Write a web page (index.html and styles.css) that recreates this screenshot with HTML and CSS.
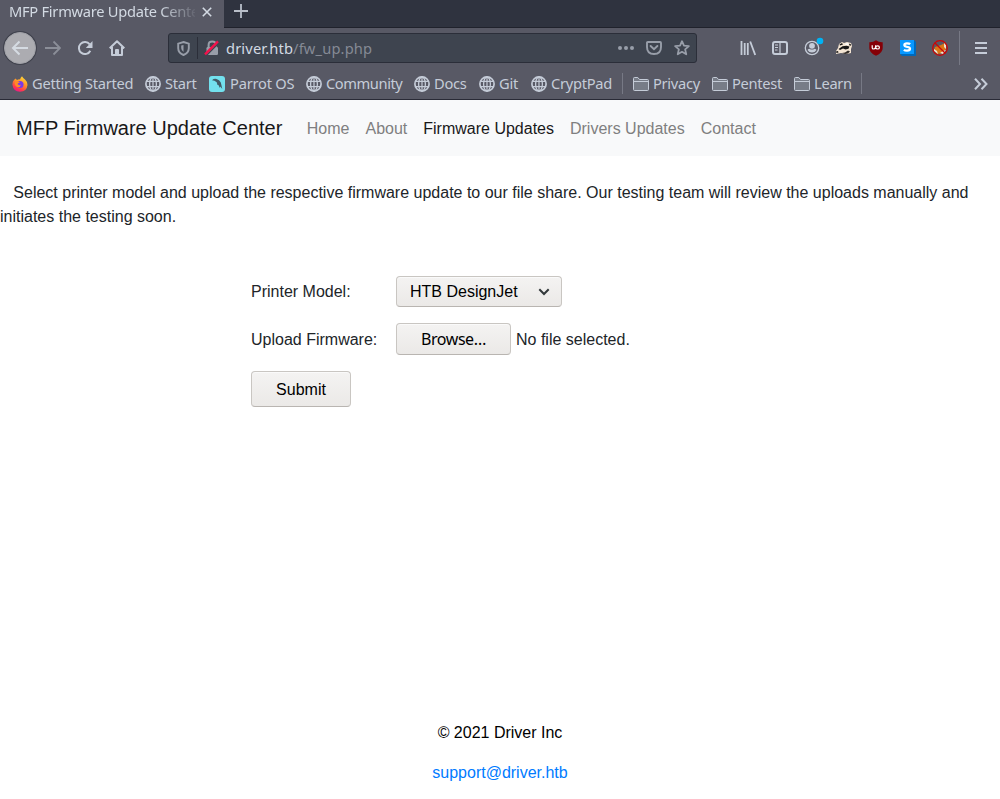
FILE: index.html
```
<!DOCTYPE html>
<html lang="en">
<head>
<meta charset="utf-8">
<title>MFP Firmware Update Center</title>
<link rel="stylesheet" href="styles.css">
</head>
<body>
<svg class="defs" aria-hidden="true">
  <symbol id="globe" viewBox="0 0 16 16"><g fill="none" stroke="currentColor"><circle cx="8" cy="8" r="7.1" stroke-width="1.7"/><ellipse cx="8" cy="8" rx="3.4" ry="7" stroke-width="1.3"/><path d="M8 1v14M1.5 5.3h13M1.5 10.7h13" stroke-width="1.2"/></g></symbol>
  <symbol id="folder" viewBox="0 0 16 16"><path d="M.5 13.5v-11q0-1 1-1h3.3l1.7 2h8q1 0 1 1v9q0 1-1 1h-13q-1 0-1-1zM.8 5.5h14.5" fill="#777c87" stroke="currentColor"/></symbol>
</svg>
<header class="browser">
  <div class="tabstrip">
    <div class="tab"><span class="tab-title">MFP Firmware Update Center</span>
      <svg class="close" width="10" height="10" viewBox="0 0 10 10"><path d="M.8.8l8.4 8.4M9.2.8L.8 9.2" fill="none" stroke="currentColor" stroke-width="1.6"/></svg>
    </div>
    <svg class="plus" width="14" height="14" viewBox="0 0 14 14"><path d="M7 0v14M0 7h14" stroke="currentColor" stroke-width="1.8"/></svg>
  </div>
  <div class="toolbar">
    <button class="back" aria-label="Back"><svg width="18" height="16" viewBox="0 0 18 16"><path d="M17 8H2M8.5 1.5L2 8l6.500 6.500" fill="none" stroke="currentColor" stroke-width="2"/></svg></button>
    <svg class="forward" width="16" height="16" viewBox="0 0 16 16"><path d="M0 8h14.500M8.500 1.500L15 8l-6.500 6.500" fill="none" stroke="currentColor" stroke-width="1.8"/></svg>
    <svg class="reload" width="16" height="16" viewBox="0 0 16 16"><path d="M12.700 4.400A6 6 0 1 0 13.300 10.700" fill="none" stroke="currentColor" stroke-width="2"/><path d="M15.500 1v7H8.800z" fill="currentColor"/></svg>
    <svg class="home" width="16" height="16" viewBox="0 0 16 16"><path d="M.7 8.300L8 1.300l7.300 7M3 7v8h10V7M7 15v-5h2v5" fill="none" stroke="currentColor" stroke-width="2" stroke-linejoin="round"/></svg>
    <div class="urlbar">
      <svg class="shield" width="13" height="15" viewBox="0 0 13 15"><path d="M6.500 1l5.300 1.600v4.600q0 4.600-5.300 6.800Q1.200 11.800 1.200 7.200V2.600z" fill="none" stroke="currentColor" stroke-width="1.900"/><path d="M6.500 4v7Q4.200 9.300 4.200 7V4.500z" fill="currentColor"/></svg>
      <span class="url-sep"></span>
      <svg class="lock" width="16" height="16" viewBox="0 0 16 16"><path d="M4.600 8V5q0-3.400 3.600-3.400T11.800 5v3" fill="none" stroke="currentColor" stroke-width="2"/><rect x="2.500" y="7" width="11.500" height="8" rx="1.200" fill="currentColor"/><path d="M2.600 15.200L14.600 3" stroke="#3e444f" stroke-width="1.600"/><path d="M1 14.400L14 1.400" stroke="#f4104a" stroke-width="2.300"/></svg>
      <span class="url">driver.htb<span class="path">/fw_up.php</span></span>
      <svg class="dots" width="16" height="4" viewBox="0 0 16 4"><g fill="currentColor"><circle cx="2" cy="2" r="2"/><circle cx="8" cy="2" r="2"/><circle cx="14" cy="2" r="2"/></g></svg>
      <svg class="pocket" width="16" height="14" viewBox="0 0 16 14"><path d="M1.900 1h12.200q.9 0 .9 1v4q0 7-7 7T1 6V2q0-1 .9-1z" fill="none" stroke="currentColor" stroke-width="1.900"/><path d="M4.600 5L8 8.200 11.400 5" fill="none" stroke="currentColor" stroke-width="1.900" stroke-linecap="round"/></svg>
      <svg class="star" width="16" height="16" viewBox="0 0 16 16"><path d="M8 1.200l1.950 4.450 4.900.5-3.700 3.200 1.100 4.900L8 11.800l-4.250 2.450 1.100-4.900-3.700-3.200 4.900-.5z" fill="none" stroke="currentColor" stroke-width="1.800" stroke-linejoin="round"/></svg>
    </div>
    <div class="actions">
      <svg width="16" height="16" viewBox="0 0 16 16"><path d="M1.500 1v14M4.700 3v12M7.800 3v12M10.200 1.500l5 13.500" fill="none" stroke="currentColor" stroke-width="1.800"/></svg>
      <svg width="16" height="16" viewBox="0 0 16 16"><rect x="1" y="2" width="14" height="12" rx="2" fill="none" stroke="currentColor" stroke-width="2"/><path d="M8 2v12M3 5h3M3 7.500h3M3 10h2.500" stroke="currentColor" stroke-width="1.200"/></svg>
      <svg width="20" height="20" viewBox="0 0 20 20"><circle cx="8" cy="12" r="6.700" fill="none" stroke="currentColor" stroke-width="1.300"/><circle cx="8" cy="9.800" r="2.900" fill="currentColor"/><path d="M3.500 14q.8-1.300 2-1.300Q8 14.500 10.500 12.700q1.200 0 2 1.300Q11 16.500 8 16.500T3.500 14z" fill="currentColor"/><circle cx="16" cy="5" r="3.300" fill="#00b3f4"/></svg>
      <svg width="18" height="16" viewBox="0 0 18 16"><path d="M1 11l2-3 1-4 3-2 2 1 3-1 4 1 1 3-1 3v4l-4 1-6-1-5 1z" fill="#f3e4d2"/><path d="M4.500 4.500L7 3l1 1.500-3 1zM3.500 9l4-2.700 4-.5 3 .7-1 2.200-3 .8-2.500-1-3 1.500zM1 11.500l2-.5.500 1.500-2 .5zM14.500 3.500l1.500 1-.5 1.500-1.500-1z" fill="#171717"/><path d="M7 13l3-.5 3-2 2 1-2 2-3 .5z" fill="#322c29"/><path d="M9.500 4l3-1 1.500 1.500-3 .5z" fill="#fff"/></svg>
      <svg width="14" height="16" viewBox="0 0 14 16"><path d="M7 .3q3 2.200 6.700 1.900V8q0 5-6.700 7.800Q.3 13 .3 8V2.200Q4 2.500 7 .3z" fill="#850006"/><path d="M3.200 5.200v2.500q0 1.300 1.300 1.300 1.500 0 2-1.500.4-1.700 2.200-1.700 1.700 0 1.700 1.600T8.700 9Q7 9 6.600 7.500V5.200" fill="none" stroke="#fff" stroke-width="1.200"/></svg>
      <svg width="16" height="16" viewBox="0 0 16 16"><path d="M14 0l2 2v14H2l-2-2z" fill="#0068b8"/><path d="M0 0h14v14H0z" fill="#0798ff"/><path d="M10.200 4.200Q9.200 3.300 7 3.300 4.400 3.300 4.400 5q0 1.400 2.800 1.900 2.800.4 2.800 1.900 0 1.900-2.900 1.900-2.200 0-3.200-1" fill="none" stroke="#fff" stroke-width="2.300"/></svg>
      <svg width="16" height="16" viewBox="0 0 16 16"><path d="M3 7l3-1 3-1 4-2 1 6-3 4-6 1-3-4z" fill="#dc7616"/><path d="M2 9l3 2 1 3-4-3zM12 3l2 2v4l-2-2zM11 11l3-1-3 4-3-1z" fill="#eee2d0"/><circle cx="8" cy="8" r="7.300" fill="none" stroke="#ce0505" stroke-width="1.300"/><path d="M2.800 2.800l10.400 10.400" stroke="#c90808" stroke-width="1.300"/></svg>
      <span class="tool-sep"></span>
      <svg width="12" height="12" viewBox="0 0 12 12"><path d="M0 1h12M0 6h12M0 11h12" stroke="currentColor" stroke-width="2"/></svg>
    </div>
  </div>
  <nav class="bookmarks">
    <a class="mark"><svg class="ico" viewBox="0 0 16 16"><defs><linearGradient id="fox" x1=".8" y1="0" x2=".3" y2="1"><stop offset="0" stop-color="#ffe33b"/><stop offset=".45" stop-color="#ff9028"/><stop offset=".8" stop-color="#ff3750"/><stop offset="1" stop-color="#e7168c"/></linearGradient></defs><path d="M3.500 2.500L5 4q2-1 3-.5Q8.500 1.500 10 .3q1 2 3 3.200Q15.500 5.500 15.500 9q-.7 6.700-7.500 6.700T.4 8.500Q.5 5 2 4z" fill="url(#fox)"/><circle cx="8" cy="8.600" r="3.500" fill="#7b39e8"/><path d="M3 5.500q3-1 5 1-2 0-2.500 1.500Q7 10 9 8.500 8 12 5 11 2 9 3 5.500z" fill="#ff8b24"/></svg><span>Getting Started</span></a>
    <a class="mark start"><svg class="ico"><use href="#globe"/></svg><span>Start</span></a>
    <a class="mark parrot"><svg class="ico" viewBox="0 0 16 16"><rect width="16" height="16" rx="3" fill="#73e1ee"/><path d="M3 4.300Q5 2.300 7.500 3q3 .5 4.300 3.500l1.500 6.500-2-2.500-.4 1.500-1.500-3L8.500 9 7.700 6.200Q5.500 4.500 3 4.300z" fill="#435b66"/></svg><span>Parrot OS</span></a>
    <a class="mark community"><svg class="ico"><use href="#globe"/></svg><span>Community</span></a>
    <a class="mark docs"><svg class="ico"><use href="#globe"/></svg><span>Docs</span></a>
    <a class="mark git"><svg class="ico"><use href="#globe"/></svg><span>Git</span></a>
    <a class="mark crypt"><svg class="ico"><use href="#globe"/></svg><span>CryptPad</span></a>
    <span class="mark-sep"></span>
    <a class="mark privacy"><svg class="ico"><use href="#folder"/></svg><span>Privacy</span></a>
    <a class="mark pentest"><svg class="ico"><use href="#folder"/></svg><span>Pentest</span></a>
    <a class="mark learn"><svg class="ico"><use href="#folder"/></svg><span>Learn</span></a>
    <span class="mark-sep"></span>
    <svg class="more" width="14" height="12" viewBox="0 0 14 12"><path d="M1 .7L6 6l-5 5.300M7.500.7l5 5.300-5 5.300" fill="none" stroke="currentColor" stroke-width="2"/></svg>
  </nav>
</header>
<nav class="site-nav">
  <a class="brand">MFP Firmware Update Center</a>
  <a>Home</a><a>About</a><a class="active">Firmware Updates</a><a>Drivers Updates</a><a>Contact</a>
</nav>
<main>
  <p class="intro">&nbsp;&nbsp; Select printer model and upload the respective firmware update to our file share. Our testing team will review the uploads manually and initiates the testing soon.</p>
  <form class="form">
    <label>Printer Model:</label>
    <div class="field"><button type="button" class="btn select"><span>HTB DesignJet</span><svg width="12" height="8" viewBox="0 0 12 8"><path d="M1.300 1.300L6 6l4.700-4.700" fill="none" stroke="#33393b" stroke-width="2"/></svg></button></div>
    <label class="low">Upload Firmware:</label>
    <div class="field"><button type="button" class="btn browse">Browse…</button><span class="low">No file selected.</span></div>
    <button type="button" class="btn submit">Submit</button>
  </form>
</main>
<footer><p>© 2021 Driver Inc</p><a>support@driver.htb</a></footer>
</body>
</html>
```
FILE: styles.css
```
* { box-sizing: border-box; }
body { margin: 0; height: 799px; display: flex; flex-direction: column; overflow: hidden; background: #fff; color: #212529; font: 16px/24px "Liberation Sans", Arial, sans-serif; }
svg { display: block; flex: none; }
button { font: inherit; }
.defs { position: absolute; width: 0; height: 0; }
.browser { height: 100px; flex: none; background: #585965; border-bottom: 1px solid #292a36; color: #c5ccd8; font: 14.67px/20px "Noto Sans", sans-serif; }
.tabstrip { height: 28px; display: flex; background: #2f333f; box-shadow: inset 0 -1px #20222c; }
.tab { width: 224px; height: 28px; display: flex; align-items: center; padding: 0 0 4px 9px; background: #585965; }
.tab-title { width: 186px; padding-bottom: 2px; overflow: hidden; white-space: nowrap; letter-spacing: -.27px; color: #d3dae3; mask-image: linear-gradient(90deg, #000 150px, transparent 190px); }
.close { margin-left: 7px; color: #d3dae3; }
.plus { margin: 4px 0 0 10px; color: #b9bfc9; }
.toolbar { height: 40px; display: flex; align-items: center; padding-left: 4px; }
.back { width: 32px; height: 32px; padding: 0; display: grid; place-items: center; border: 1px solid #a0a1a7; border-radius: 50%; background: #acacb1; color: #d5dbe2; box-shadow: 0 0 0 1px #41434e; }
.forward { margin-left: 9px; color: #8b8e98; }
.reload { margin-left: 16px; }
.home { margin-left: 16px; }
.urlbar { width: 529px; height: 30px; margin-left: 43px; display: flex; align-items: center; padding-left: 8px; border: 1px solid #2b2e39; border-radius: 3px; background: #3e444f; color: #989ea9; }
.url-sep { width: 1px; height: 22px; margin: 0 6px 0 7px; background: #2b2e39; }
.url { width: 387px; margin-left: 6px; letter-spacing: .15px; color: #d3dae3; }
.path { color: #858a95; }
.dots { margin-left: 5px; }
.pocket { margin-left: 12px; }
.star { margin-left: 12px; }
.actions { display: flex; align-items: center; margin-left: 43px; }
.actions svg:nth-child(2) { margin-left: 16px; }
.actions svg:nth-child(3) { margin: -4px 0 0 16px; }
.actions svg:nth-child(4) { margin-left: 11px; }
.actions svg:nth-child(5) { margin-left: 16px; }
.actions svg:nth-child(6) { margin-left: 17px; }
.actions svg:nth-child(7) { margin-left: 16px; }
.tool-sep { width: 1px; height: 34px; margin: 0 15px 0 11px; background: #777985; }
.bookmarks { height: 31px; display: flex; align-items: center; padding-left: 12px; letter-spacing: -.28px; }
.mark { width: 133px; display: flex; align-items: center; gap: 4px; white-space: nowrap; flex: none; }
.mark span { padding-bottom: 2px; }
.ico { width: 16px; height: 16px; }
.start { width: 64px; }
.parrot { width: 97px; gap: 5px; letter-spacing: -.22px; }
.community { width: 108px; letter-spacing: -.42px; }
.docs { width: 65px; }
.git { width: 52px; }
.crypt { width: 91px; }
.mark-sep { width: 1px; height: 21px; background: #777985; }
.privacy { width: 79px; margin-left: 10px; }
.pentest { width: 82px; }
.learn { width: 67px; }
.more { margin-left: 112px; }
.site-nav { height: 56px; flex: none; display: flex; align-items: center; gap: 16px; padding-left: 16px; background: #f8f9fa; color: #7f7f80; }
.site-nav a { padding-top: 1px; }
.site-nav .brand { margin-right: 8.4px; padding-top: 0; color: #181819; font-size: 20px; line-height: 30px; }
.site-nav .active { color: #181819; }
main { flex: 1; }
.intro { margin: 25px 0 47px; }
.form { width: 379px; margin-left: 251px; display: grid; grid-template-columns: 145px 1fr; row-gap: 16px; align-items: center; }
.field { display: flex; align-items: center; gap: 5px; white-space: nowrap; }
.low { padding-top: 2px; }
.btn { padding: 0; border: 1px solid #c9c6c2; border-bottom-color: #b9b5b1; border-radius: 4px; background: linear-gradient(#f4f3f2, #ebe9e7); color: #000; box-shadow: inset 0 1px #fafafa; }
.select { width: 166px; height: 31px; display: flex; align-items: center; justify-content: space-between; padding: 0 11px 0 13px; }
.browse { width: 115px; height: 32px; font-family: "Noto Sans", sans-serif; letter-spacing: -.45px; }
.submit { width: 100px; height: 36px; padding-top: 2px; }
footer { height: 78px; text-align: center; color: #000; }
footer p { margin: 0 0 16px; }
footer a { color: #007bff; }
```
